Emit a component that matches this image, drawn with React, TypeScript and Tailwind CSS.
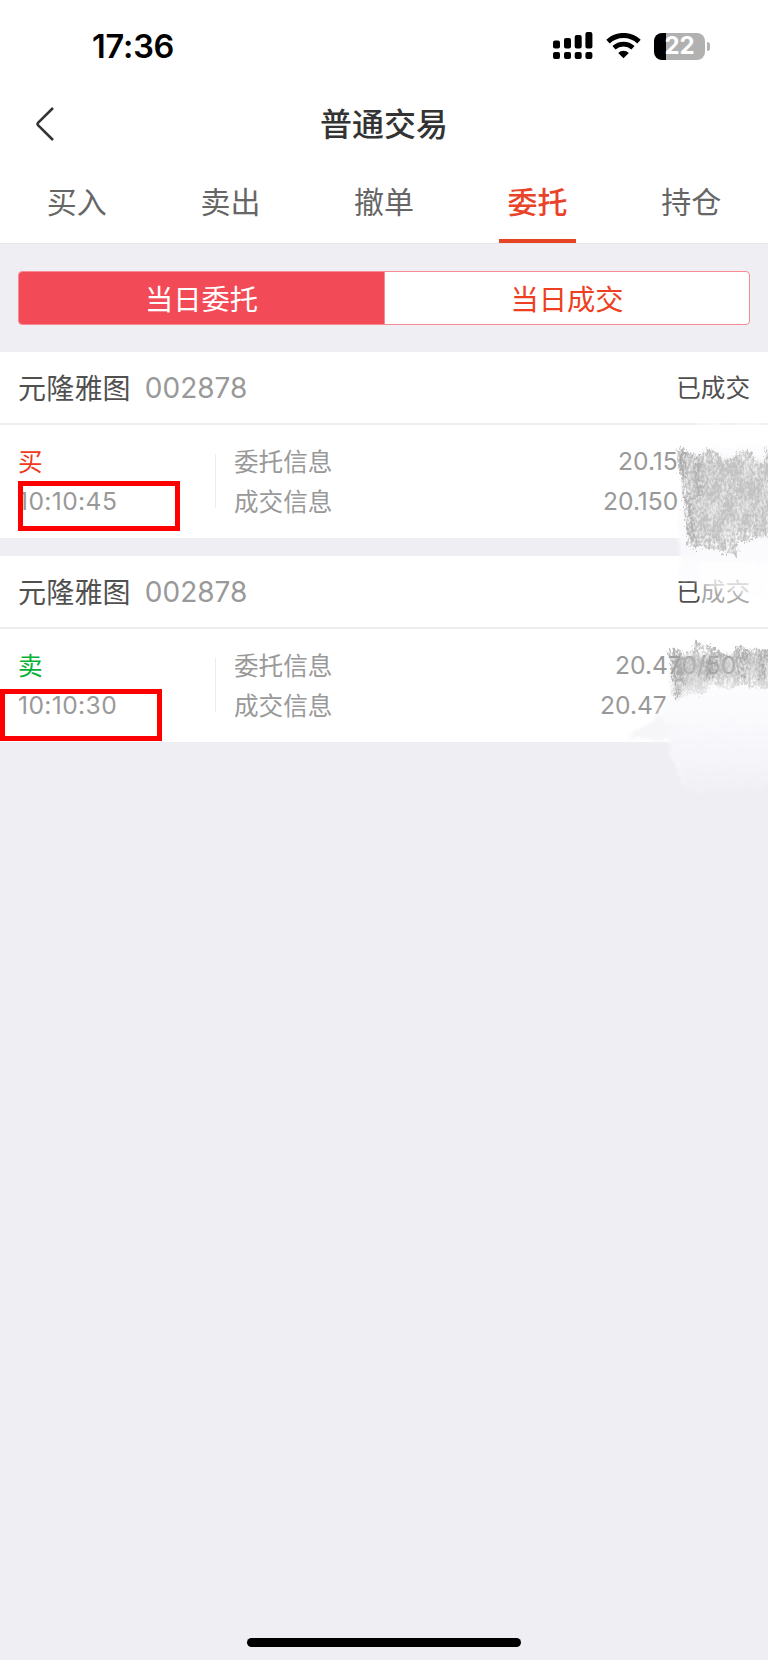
import React from 'react';
import clsx from 'clsx';

interface Order {
  name: string;
  code: string;
  status: string;
  side: 'buy' | 'sell';
  time: string;
  entrust: string;
  deal: string;
}

const tabs = ['买入', '卖出', '撤单', '委托', '持仓'];

const orders: Order[] = [
  {
    name: '元隆雅图',
    code: '002878',
    status: '已成交',
    side: 'buy',
    time: '10:10:45',
    entrust: '20.150',
    deal: '20.150',
  },
  {
    name: '元隆雅图',
    code: '002878',
    status: '已成交',
    side: 'sell',
    time: '10:10:30',
    entrust: '20.470/50',
    deal: '20.47',
  },
];

const SignalIcon = () => (
  <svg width="40" height="28" viewBox="0 0 40 28" className="shrink-0">
    <rect x="0" y="8.5" width="7" height="8" rx="2" />
    <rect x="11" y="6" width="7" height="10.5" rx="2" />
    <rect x="21.7" y="3" width="7" height="13.5" rx="2" />
    <rect x="32.4" y="0" width="7" height="16.5" rx="2" />
    <rect x="0" y="20" width="7" height="7" rx="2" />
    <rect x="11" y="20" width="7" height="7" rx="2" />
    <rect x="21.7" y="20" width="7" height="7" rx="2" />
    <rect x="32.4" y="20" width="7" height="7" rx="2" />
  </svg>
);

const WifiIcon = () => (
  <svg width="35" height="26" viewBox="0 0 35 26" className="shrink-0">
    <path d="M2 8.6A22.5 22.5 0 0 1 33 8.6" fill="none" stroke="#000" strokeWidth="5" />
    <path d="M8 14.8A14 14 0 0 1 27 14.8" fill="none" stroke="#000" strokeWidth="4.6" />
    <path d="M17.5 25.3L12.2 20A7.6 7.6 0 0 1 22.8 20Z" />
  </svg>
);

const Battery = () => (
  <div className="flex items-center">
    <div className="flex h-[27px] w-[51px] items-center justify-center overflow-hidden rounded-[8px] bg-[linear-gradient(90deg,#000_0_12px,#b1b1b1_12px)] font-[Inter,sans-serif] text-[24px] leading-none font-bold text-white">
      22
    </div>
    <div className="ml-[2px] h-[9px] w-[3px] rounded-r-full bg-[#b1b1b1]" />
  </div>
);

const OrderCard: React.FC<{ order: Order }> = ({ order }) => (
  <div className="h-[186px] bg-white">
    <div className="flex h-[73px] items-center border-b-2 border-[#ededf0] px-[18px]">
      <span className="pb-[2px] text-[28px] tracking-[0.2px] text-[#505050]">{order.name}</span>
      <span className="ml-[14px] font-[Inter,sans-serif] text-[28px] text-[#999]">{order.code}</span>
      <span className="ml-auto pb-[2px] text-[24.6px] text-[#505050]">{order.status}</span>
    </div>
    <div className="flex px-[18px] pt-[15px] text-[24.6px] leading-[40px] text-[#999]">
      <div className="w-[197px]">
        <div className={order.side === 'buy' ? 'text-[#f03a1c]' : 'text-[#06b035]'}>
          {order.side === 'buy' ? '买' : '卖'}
        </div>
        <div className="pt-px font-[Inter,sans-serif] tracking-[0.4px]">{order.time}</div>
      </div>
      <div className="mt-[14px] h-[54px] w-px bg-[#ededf0]" />
      <div className="ml-[18px]">
        <div>委托信息</div>
        <div>成交信息</div>
      </div>
      <div className={clsx('ml-auto pt-px font-[Inter,sans-serif]', order.side === 'buy' ? 'w-[147px]' : 'w-[150px]')}>
        <div className="pl-[15px]">{order.entrust}</div>
        <div>{order.deal}</div>
      </div>
    </div>
  </div>
);

// 涂抹遮挡数量
const Scribble = () => (
  <svg
    className="pointer-events-none absolute top-[400px] left-[580px]"
    width="188"
    height="440"
    viewBox="580 400 188 440"
  >
    <defs>
      <filter id="chalk" x="-10%" y="-10%" width="120%" height="120%">
        <feTurbulence type="fractalNoise" baseFrequency="0.45 0.28" numOctaves="4" seed="7" result="noise" />
        <feTurbulence type="fractalNoise" baseFrequency="0.12 0.05" numOctaves="2" seed="12" result="patch" />
        <feComposite in="noise" in2="patch" operator="arithmetic" k2="0.65" k3="0.45" result="mix" />
        <feColorMatrix in="mix" type="matrix" values="0 0 0 0 0  0 0 0 0 0  0 0 0 0 0  0 0 0 3.4 -1.2" result="grain" />
        <feDisplacementMap in="SourceGraphic" in2="noise" scale="10" xChannelSelector="R" yChannelSelector="G" result="rough" />
        <feComposite in="rough" in2="grain" operator="in" />
        <feGaussianBlur stdDeviation="0.6" />
      </filter>
      <filter id="smear" x="-10%" y="-10%" width="120%" height="120%">
        <feTurbulence type="fractalNoise" baseFrequency="0.16" numOctaves="3" seed="3" result="noise" />
        <feDisplacementMap in="SourceGraphic" in2="noise" scale="12" xChannelSelector="R" yChannelSelector="G" />
        <feGaussianBlur stdDeviation="1.6" />
      </filter>
      <filter id="soft" x="-10%" y="-20%" width="120%" height="140%">
        <feGaussianBlur stdDeviation="3" />
      </filter>
      <linearGradient id="fade" x1="0" y1="0" x2="0" y2="1">
        <stop offset="0" stopColor="#fdfdfe" />
        <stop offset="0.45" stopColor="#f9f8fc" />
        <stop offset="1" stopColor="#f1f0f5" />
      </linearGradient>
      <linearGradient id="gray" x1="0" y1="0" x2="0" y2="1">
        <stop offset="0" stopColor="#aaa" />
        <stop offset="0.5" stopColor="#bababa" />
        <stop offset="1" stopColor="#f0f0f2" />
      </linearGradient>
    </defs>

    <g filter="url(#smear)">
      <path d="M698 423H768V426H698Z" fill="#fff" opacity="0.7" />
      <path d="M686 450L768 444V560H680L678 520Z" fill="#fbfbfd" opacity="0.75" />
      <path d="M678 505L690 550L768 535V608L762 600L680 578Z" fill="#fafafd" opacity="0.6" />
      <path d="M701 550H772V612H735L701 610Z" fill="#fff" opacity="0.5" />
      <path d="M700 540L772 532V562H696Z" fill="#fafafd" opacity="0.85" />
    </g>
    <path d="M684 458L776 462V532L742 532L690 540Z" fill="#d0d0d0" opacity="0.45" filter="url(#soft)" />
    <g filter="url(#chalk)">
      <path
        d="M676 451L683 447L690 453L700 456L705 449L716 451L723 461L734 457L740 450L752 452L758 465L765 462L765 446H776V538L757 537L746 542L738 540L737 556L725 553L710 549L700 546L691 551L688 545L684 505L681 480Z"
        fill="#c2c2c2"
      />
      <path d="M678 450L687 450L696 548L691 551Z" fill="#b0b0b0" />
      <path d="M692 453L701 457L704 490L697 500Z" fill="#b4b4b4" />
    </g>

    <g filter="url(#smear)">
      <path d="M671 692L700 681L776 678V786L690 793L678 768L668 741L628 738L657 715Z" fill="url(#fade)" />
      <path d="M666 732L671 745L688 793L681 780Z" fill="#fff" opacity="0.5" />
      <path d="M629 735L659 717L671 728L666 740Z" fill="#f3f3f5" opacity="0.6" />
    </g>
    <path d="M672 656L776 656V678L710 678L680 692L674 696Z" fill="#bbb" opacity="0.45" filter="url(#soft)" />
    <g filter="url(#chalk)" opacity="0.8">
      <path
        d="M668 650L677 648L681 653L692 650L695 641L712 647L731 658L735 648L740 644L746 651L757 648L764 650H776V690L755 688L744 684L728 690L712 686L703 696L690 693L681 698L677 703L673 697L671 665Z"
        fill="url(#gray)"
      />
      <path
        d="M670 650H681L685 682L676 702ZM704 660L718 658L714 680L707 682ZM736 646L749 650L745 680L737 676ZM757 650L766 650L767 682L760 680Z"
        fill="#a0a0a0"
      />
      <path d="M695 641L712 647L733 659L730 663L708 653L694 646Z" fill="#a8a8a8" />
    </g>
  </svg>
);

export default function App() {
  return (
    <div className="relative flex h-[1662px] w-[768px] flex-col overflow-hidden border-b-2 border-white bg-[#efeef3] font-['Noto_Sans_CJK_SC',sans-serif]">
      <header className="h-[244px] border-b border-[#e8e8ec] bg-white">
        <div className="flex h-[92px] items-center pr-[58px] pl-[92px]">
          <span className="pt-[2px] font-[Inter,sans-serif] text-[32.5px] leading-none font-semibold tracking-[-0.2px] text-black">
            17:36
          </span>
          <div className="ml-auto flex items-center gap-[13px]">
            <SignalIcon />
            <WifiIcon />
            <Battery />
          </div>
        </div>
        <div className="grid h-[64px] grid-cols-3 items-center">
          <svg width="24" height="38" viewBox="0 0 24 38" className="ml-[34px]">
            <path
              d="M19 3L4.2 17.6Q2.8 19 4.2 20.4L19 35"
              fill="none"
              stroke="#333"
              strokeWidth="2.6"
            />
          </svg>
          <h1 className="pb-[4px] text-center text-[32px] leading-none font-medium text-[#333]">普通交易</h1>
        </div>
        <nav className="grid h-[87px] grid-cols-5">
          {tabs.map((tab) => (
            <div
              key={tab}
              className={clsx(
                'flex flex-col items-center pt-[22px] text-[30px] leading-[44px]',
                tab === '委托' ? 'font-medium text-[#e9432a]' : 'text-[#666]'
              )}
            >
              {tab}
              {tab === '委托' && <div className="mt-auto h-[4px] w-1/2 bg-[#e64323]" />}
            </div>
          ))}
        </nav>
      </header>

      <div className="flex h-[108px] items-center px-[18px]">
        <div className="grid h-[54px] w-full grid-cols-2 overflow-hidden rounded-[4px] border border-[#f58c94] bg-white text-center text-[28.3px] leading-[52px]">
          <div className="bg-[#f34a58] text-white">当日委托</div>
          <div className="border-l border-[#f58c94] text-[#ee3f22]">当日成交</div>
        </div>
      </div>

      <div className="flex flex-col gap-[18px]">
        {orders.map((order) => (
          <OrderCard key={order.time} order={order} />
        ))}
      </div>

      <div className="mx-auto mt-auto mb-[13px] h-[9px] w-[274px] rounded-full bg-black" />

      <Scribble />
      {/* 时间标注框 */}
      <div className="absolute top-[481px] left-[18px] h-[50px] w-[162px] border-[5px] border-[#f00]" />
      <div className="absolute top-[689px] left-0 h-[52px] w-[162px] border-[5px] border-[#f00]" />
    </div>
  );
}
